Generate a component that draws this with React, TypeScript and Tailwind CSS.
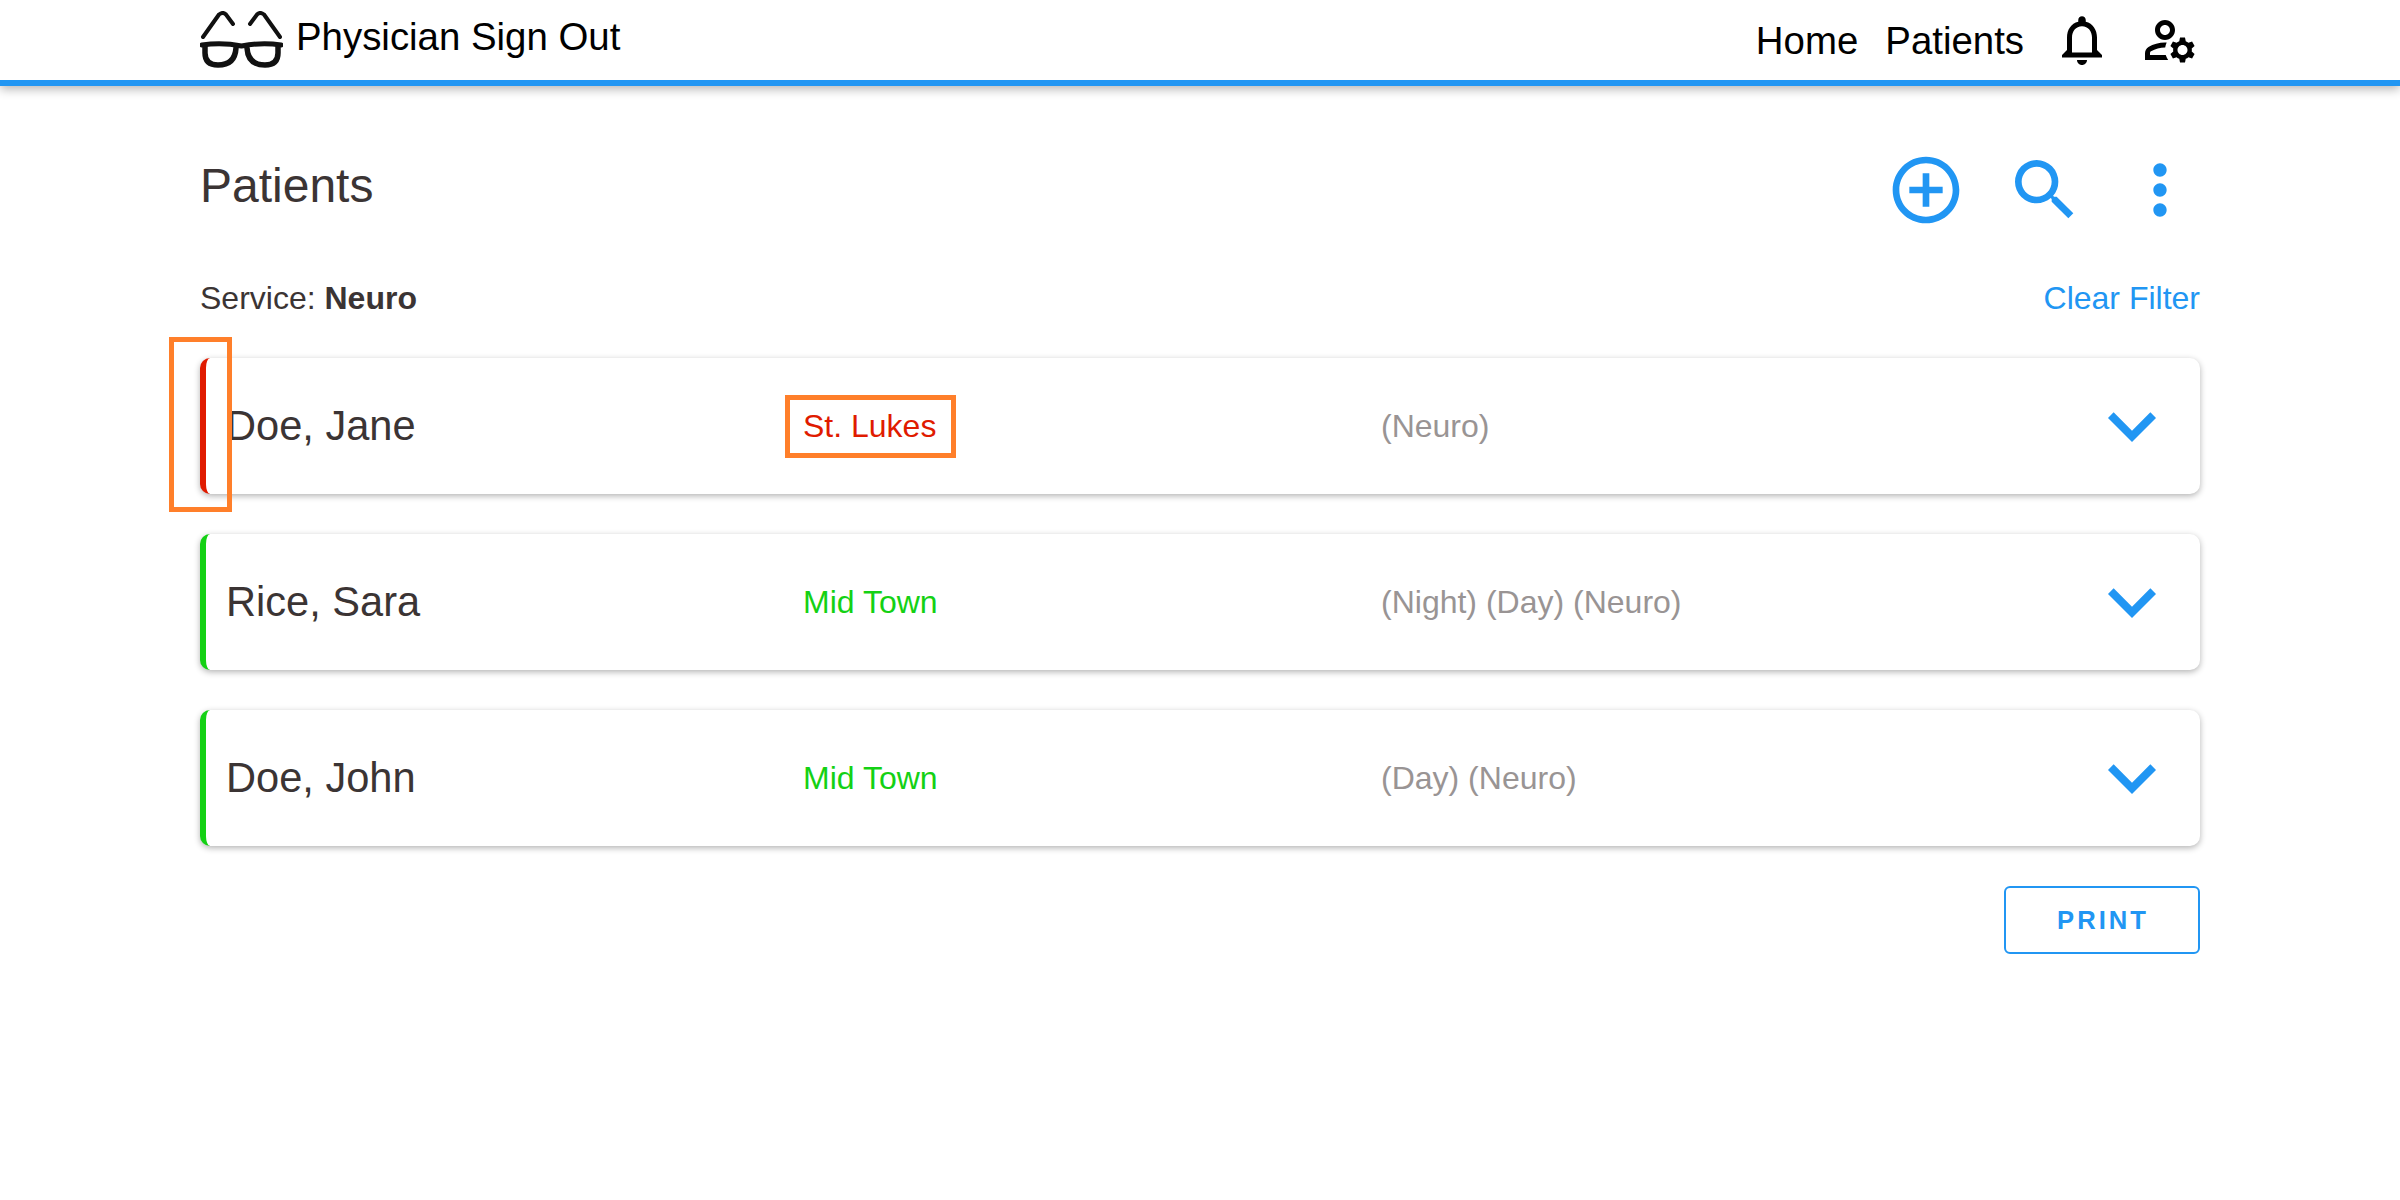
import { MdAddCircleOutline, MdExpandMore, MdMoreVert, MdOutlineManageAccounts, MdOutlineNotifications, MdSearch } from "react-icons/md";

const patients = [
  { name: "Doe, Jane", site: "St. Lukes", tags: "(Neuro)", border: "border-[#e01b00]", color: "text-[#e01b00]", flagged: true },
  { name: "Rice, Sara", site: "Mid Town", tags: "(Night) (Day) (Neuro)", border: "border-[#14d114]", color: "text-[#14d114]", flagged: false },
  { name: "Doe, John", site: "Mid Town", tags: "(Day) (Neuro)", border: "border-[#14d114]", color: "text-[#14d114]", flagged: false },
];

function Glasses() {
  return (
    <svg width="83" height="57" viewBox="0 0 83 57" fill="none" stroke="#111" strokeLinecap="round" className="-mt-[2px]">
      <path d="M3 26 L19 3.5 Q23 0.5 26 3.5 L33 13" strokeWidth="4" />
      <path d="M80 26 L64 3.5 Q60 0.5 57 3.5 L50 13" strokeWidth="4" />
      <path d="M2 34 Q22 31 41.5 35 Q62 31 81 34" strokeWidth="5" />
      <path d="M5 36 V42 Q5 54 18 54 Q35 54 36 37" strokeWidth="5.5" />
      <path d="M78 36 V42 Q78 54 65 54 Q48 54 47 37" strokeWidth="5.5" />
    </svg>
  );
}

export default function App() {
  return (
    <div className="relative min-h-[1200px] bg-white font-['Liberation_Sans',Arial,sans-serif] text-[#3b3434]">
      {/* Nav */}
      <header className="h-[86px] border-b-[6px] border-[#2196f3] shadow-[0_3px_10px_rgba(0,0,0,0.3)]">
        <div className="mx-auto flex h-full w-[2000px] items-center justify-between">
          <div className="flex items-start gap-[13px] text-black">
            <Glasses />
            <span className="mt-[2px] text-[38.4px] leading-[44px]">Physician Sign Out</span>
          </div>
          <nav className="flex items-center text-[38.4px] text-black">
            <span className="mr-[27px] mt-[2px]">Home</span>
            <span className="mr-[28px] mt-[2px]">Patients</span>
            <MdOutlineNotifications size={60} className="mr-[28px]" />
            <MdOutlineManageAccounts size={60} />
          </nav>
        </div>
      </header>

      <main className="mx-auto w-[2000px]">
        <div className="mt-[64px] flex h-[80px] items-center justify-between">
          <h1 className="pb-[8px] text-[48px] font-normal leading-none">Patients</h1>
          <div className="flex items-center text-[#2196f3]">
            <MdAddCircleOutline size={80} className="mr-[39px]" />
            <MdSearch size={80} className="mr-[35px]" />
            <MdMoreVert size={80} />
          </div>
        </div>

        <div className="mt-[50px] flex items-center justify-between text-[32px] leading-[37px]">
          <span>
            Service: <b>Neuro</b>
          </span>
          <span className="text-[#2196f3]">Clear Filter</span>
        </div>

        <div className="mt-[41px] flex flex-col gap-[40px]">
          {patients.map((p) => (
            <div
              key={p.name}
              className={`flex h-[136px] items-center rounded-[10px] border-l-[6px] bg-white pl-[20px] pr-[20px] shadow-[0_2px_6px_rgba(0,0,0,0.3)] ${p.border}`}
            >
              <div className="w-[577px] text-[41.6px]">{p.name}</div>
              <div className={`w-[578px] text-[32px] ${p.color}`}>{p.site}</div>
              <div className="flex-1 text-[32px] text-[#999494]">{p.tags}</div>
              <MdExpandMore size={96} className="text-[#2196f3]" />
            </div>
          ))}
        </div>

        <div className="mt-[40px] flex justify-end">
          <button className="h-[68px] w-[196px] rounded-md border-2 border-[#2196f3] pl-[2px] text-[25.6px] font-bold tracking-[3px] text-[#2196f3]">
            PRINT
          </button>
        </div>
      </main>

      {/* annotation boxes over the first row */}
      <div className="absolute left-[169px] top-[337px] h-[175px] w-[63px] border-[5px] border-[#ff7f2a]" />
      <div className="absolute left-[785px] top-[395px] h-[63px] w-[171px] border-[5px] border-[#ff7f2a]" />
    </div>
  );
}
